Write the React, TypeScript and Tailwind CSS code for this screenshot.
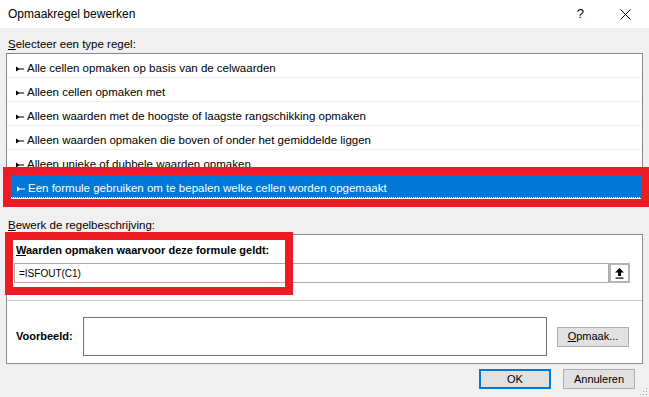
import React from "react";

const rules = [
  "Alle cellen opmaken op basis van de celwaarden",
  "Alleen cellen opmaken met",
  "Alleen waarden met de hoogste of laagste rangschikking opmaken",
  "Alleen waarden opmaken die boven of onder het gemiddelde liggen",
  "Alleen unieke of dubbele waarden opmaken",
  "Een formule gebruiken om te bepalen welke cellen worden opgemaakt",
];

function Bullet({ color }: { color: string }) {
  return (
    <svg width="8" height="8" viewBox="0 0 8 8" className="shrink-0">
      <path d="M0 1.5 L0 6.5 L3 4.5 L8 4.5 L8 3.5 L3 3.5 Z" fill={color} />
    </svg>
  );
}

function Btn({ children, primary }: { children: React.ReactNode; primary?: boolean }) {
  return (
    <div
      className={
        "flex h-[20px] w-[72px] items-center justify-center bg-[#E1E1E1] text-[11px] text-black " +
        (primary ? "border-2 border-[#0078D7]" : "border border-[#ADADAD]")
      }
    >
      {children}
    </div>
  );
}

export default function App() {
  return (
    <div
      className="relative h-[397px] w-[649px] overflow-hidden bg-[#F0F0F0] text-[11.5px] text-black"
      style={{ fontFamily: '"Liberation Sans", Arial, sans-serif' }}
    >
      {/* title bar */}
      <div className="flex h-[28px] items-center justify-between bg-white pl-[8px]">
        <span className="text-[12px]">Opmaakregel bewerken</span>
        <div className="flex items-center">
          <span className="mr-[36px] text-[13px]">?</span>
          <svg width="11" height="11" viewBox="0 0 11 11" className="mr-[18px]">
            <path d="M0.5 0.5 L10.5 10.5 M10.5 0.5 L0.5 10.5" stroke="#000" strokeWidth="1" />
          </svg>
        </div>
      </div>

      <div className="mt-[8px] h-[16px] pl-[8px] leading-[16px]">
        <span className="underline">S</span>electeer een type regel:
      </div>

      {/* rule type list */}
      <div className="mx-[6px] mt-[1px] h-[153px] overflow-hidden border border-[#828790] bg-white text-[11.5px]">
        {rules.map((r, i) => {
          const sel = i === rules.length - 1;
          return (
            <div
              key={r}
              className={
                "flex h-[24px] items-center gap-[3px] pl-[9px] pt-[6px] " +
                (sel
                  ? "border border-dotted border-white bg-[#0078D7] text-white"
                  : "border-b border-[#F0F0F0]")
              }
            >
              <Bullet color={sel ? "#fff" : "#000"} />
              <span>{r}</span>
            </div>
          );
        })}
      </div>

      <div className="mt-[11px] h-[16px] pl-[8px] leading-[16px]">
        <span className="underline">B</span>ewerk de regelbeschrijving:
      </div>

      {/* description group */}
      <div className="mx-[6px] mt-[1px] flex h-[130px] flex-col border border-[#8C8C8C] bg-white">
        <div className="h-[23px] pl-[9px] pt-[7px] text-[11px] font-bold leading-[16px]">
          <span className="underline">W</span>aarden opmaken waarvoor deze formule geldt:
        </div>
        <div className="ml-[7px] mt-[5px] flex h-[20px] w-[616px]">
          <div className="flex flex-1 items-center border border-[#ABABAB] pl-[4px] text-[10px]">=ISFOUT(C1)</div>
          <div className="flex w-[21px] items-center justify-center border-2 border-[#B4B4B4] bg-white">
            <svg width="9" height="11" viewBox="0 0 9 11">
              <path d="M4.5 0 L9 4.5 L6 4.5 L6 8 L3 8 L3 4.5 L0 4.5 Z" fill="#000" />
              <rect x="0.5" y="9.5" width="8" height="1.2" fill="#000" />
            </svg>
          </div>
        </div>
        <div className="mt-[17px] h-px bg-[#C8C8C8]" />
        <div className="mt-[16px] flex items-center pl-[9px]">
          <span className="w-[67px] text-[11px] font-bold">Voorbeeld:</span>
          <div className="h-[39px] w-[464px] border border-[#707070] bg-white" />
          <div className="ml-[10px] flex h-[20px] w-[72px] items-center justify-center border border-[#ADADAD] bg-[#E1E1E1] text-[11px]">
            <span className="underline">O</span>pmaak...
          </div>
        </div>
      </div>

      {/* dialog buttons */}
      <div className="mt-[5px] flex justify-end gap-[12px] pr-[14px]">
        <Btn primary>OK</Btn>
        <Btn>Annuleren</Btn>
      </div>

      {/* size grip */}
      <svg width="8" height="8" viewBox="0 0 8 8" className="absolute bottom-[1px] right-[1px]">
        <rect x="6" y="0" width="1" height="1" fill="#A0A0A0" />
        <rect x="3" y="3" width="1" height="1" fill="#A0A0A0" />
        <rect x="6" y="3" width="1" height="1" fill="#A0A0A0" />
        <rect x="0" y="6" width="1" height="1" fill="#A0A0A0" />
        <rect x="3" y="6" width="1" height="1" fill="#A0A0A0" />
        <rect x="6" y="6" width="1" height="1" fill="#A0A0A0" />
      </svg>

      {/* red annotation boxes */}
      <div className="absolute left-[3px] top-[167px] h-[40px] w-[646px] border-[8px] border-[#ED1C24]" />
      <div className="absolute left-[5px] top-[232px] h-[63px] w-[288px] border-[8px] border-[#ED1C24]" />
    </div>
  );
}
